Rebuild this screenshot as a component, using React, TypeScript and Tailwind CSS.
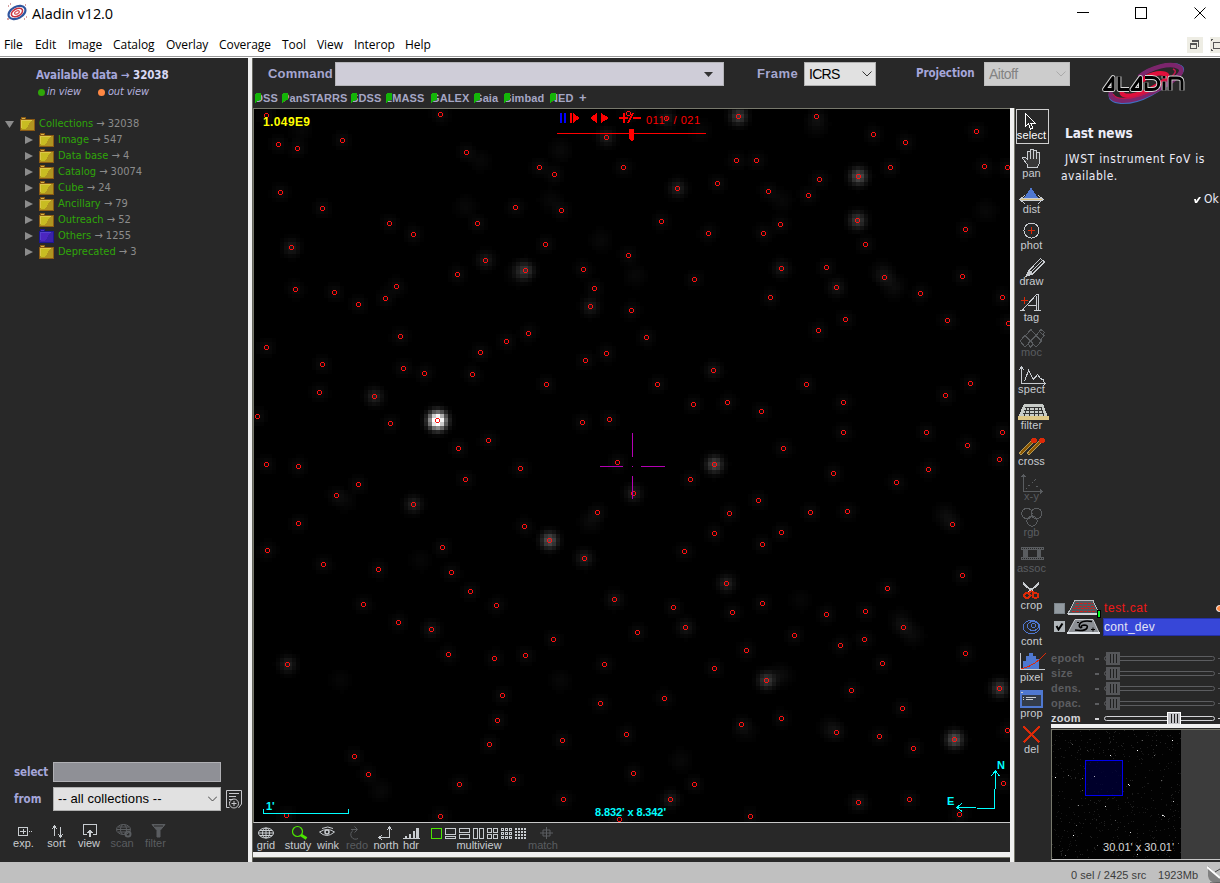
import type { ReactNode } from "react";

const tahoma = "font-['DejaVu_Sans_Condensed','DejaVu_Sans',sans-serif] [font-stretch:condensed]";
const arial = "font-['Liberation_Sans',sans-serif]";

/* ---------- Sky view data ---------- */

const SOURCES: [number, number][] = [
  [266, 115], [440, 114], [342, 140], [278, 144], [297, 148], [466, 152], [606, 137], [554, 174], [539, 167], [280, 192],
  [322, 208], [389, 223], [413, 234], [291, 247], [477, 223], [515, 207], [561, 210], [623, 167], [677, 188], [717, 183],
  [661, 221], [545, 244], [485, 260], [457, 274], [525, 270], [583, 269], [628, 255], [594, 288], [590, 306], [631, 310],
  [295, 289], [334, 292], [358, 304], [385, 298], [396, 286], [266, 347], [322, 364], [319, 392], [374, 396], [400, 336],
  [403, 368], [424, 373], [390, 423], [437, 420], [472, 374], [480, 352], [506, 341], [528, 333], [546, 384], [585, 360],
  [606, 353], [646, 337], [657, 384], [257, 416], [266, 464], [298, 466], [336, 495], [358, 484], [298, 523], [267, 550],
  [323, 564], [378, 569], [363, 604], [398, 622], [431, 629], [448, 654], [287, 664], [442, 547], [451, 572], [470, 591],
  [496, 605], [494, 658], [413, 504], [465, 479], [458, 448], [488, 440], [520, 468], [524, 526], [549, 540], [584, 558],
  [597, 512], [633, 493], [617, 462], [582, 422], [609, 419], [614, 599], [637, 632], [604, 664], [553, 639], [525, 655],
  [502, 695], [497, 720], [489, 744], [459, 784], [513, 779], [562, 740], [600, 703], [626, 734], [664, 698], [633, 773],
  [563, 799], [440, 816], [354, 756], [368, 774], [286, 815], [619, 819], [670, 799], [694, 784], [750, 816],
  [738, 116], [816, 116], [873, 134], [905, 142], [976, 131], [736, 160], [756, 160], [890, 167], [984, 166], [1007, 167],
  [768, 191], [819, 179], [808, 195], [858, 176], [708, 233], [763, 233], [780, 224], [857, 220], [865, 244], [965, 229],
  [694, 279], [781, 268], [826, 267], [836, 287], [770, 297], [884, 277], [962, 276], [920, 293], [1002, 297], [818, 330],
  [845, 319], [947, 320], [1008, 323], [713, 370], [727, 402], [693, 404], [761, 411], [806, 384], [843, 402], [843, 432],
  [945, 395], [970, 383], [926, 432], [967, 445], [999, 459], [1002, 432], [714, 464], [690, 479], [783, 448], [833, 473],
  [928, 469], [896, 482], [758, 500], [729, 513], [714, 533], [684, 551], [762, 544], [781, 532], [810, 512], [847, 511],
  [952, 524], [962, 575], [726, 583], [732, 612], [762, 603], [673, 607], [685, 627], [746, 650], [714, 668], [794, 635],
  [826, 614], [865, 611], [887, 588], [903, 627], [840, 645], [864, 639], [882, 663], [965, 653], [766, 680], [851, 690],
  [902, 708], [781, 718], [741, 724], [836, 732], [879, 736], [913, 748], [954, 739], [999, 688], [1007, 730], [858, 802],
  [909, 799], [959, 814], [1003, 783], [666, 118], [628, 113],
];

const GLOW: Record<string, number> = {
  "437,420": 340, "549,540": 84, "858,176": 82, "857,220": 60, "714,464": 72, "954,739": 82, "738,116": 60,
  "999,688": 56, "766,680": 58, "374,396": 36, "413,504": 34, "287,664": 32, "291,247": 26, "525,270": 44,
  "677,188": 32, "584,558": 30, "726,583": 34, "633,493": 30, "590,306": 28, "485,260": 26, "781,268": 24,
  "606,137": 28, "836,287": 22, "614,599": 20, "431,629": 20, "858,802": 22, "685,627": 22, "713,370": 20,
  "670,799": 26, "666,118": 24,
};

const FAINT: [number, number, number][] = [
  [590, 521, 10], [882, 272, 12], [893, 286, 12], [781, 200, 8], [420, 560, 6], [340, 680, 6], [900, 620, 10],
  [912, 634, 10], [519, 272, 18], [800, 600, 6], [465, 206, 8], [300, 130, 7], [700, 130, 7], [560, 150, 9],
  [480, 160, 7], [600, 240, 8], [745, 730, 8], [830, 728, 12], [985, 210, 8], [816, 125, 10], [380, 790, 8],
  [550, 200, 8], [680, 760, 8], [560, 680, 7], [945, 515, 12], [780, 675, 12], [345, 500, 7], [635, 275, 8],
];

type Cell = { x: number; y: number; v: number };

function buildGlow(): Cell[] {
  const sum = new Map<string, Cell>();
  const add = (cx: number, cy: number, amp: number, sigma: number) => {
    const x0 = Math.floor(cx / 4) * 4;
    const y0 = Math.floor((cy - 2) / 4) * 4 + 2;
    for (let i = -4; i <= 4; i++)
      for (let j = -4; j <= 4; j++) {
        const x = x0 + i * 4;
        const y = y0 + j * 4;
        const dx = x + 2 - cx - 0.5;
        const dy = y + 2 - cy - 0.5;
        const v = amp * Math.exp(-(dx * dx + dy * dy) / (2 * sigma * sigma));
        if (v < 1.5) continue;
        const key = `${x},${y}`;
        const cell = sum.get(key);
        if (cell) cell.v += v;
        else sum.set(key, { x, y, v });
      }
  };
  SOURCES.forEach(([x, y]) => add(x, y, GLOW[`${x},${y}`] ?? 11, 5.6));
  FAINT.forEach(([x, y, a]) => add(x, y, a, 7));
  return [...sum.values()];
}

const CELLS = buildGlow();

const ringPath = SOURCES.map(
  ([x, y]) => `M${x - 1} ${y - 2}h3v1h-3zM${x - 1} ${y + 2}h3v1h-3zM${x - 2} ${y - 1}h1v3h-1zM${x + 2} ${y - 1}h1v3h-1z`,
).join("");

function SkyView() {
  return (
    <svg className="block h-[713px] w-[756px] bg-black" viewBox="254 109 756 713" shapeRendering="crispEdges">
      {CELLS.map((c) => {
        const v = Math.min(255, Math.round(c.v));
        return <rect key={`${c.x},${c.y}`} x={c.x} y={c.y} width="4" height="4" fill={`rgb(${v},${v},${v})`} />;
      })}
      <path d={ringPath} fill="#ff1010" />
      <path d="M600 466.5h23M641 466.5h24M632.5 433v24M632.5 476v23M632 466.5h1" stroke="#b400b4" fill="none" />
      <path d="M560.5 113v10M564.5 113v10" stroke="#0000ff" strokeWidth="2" />
      <path d="M570 113h2v10h-2zM573 113l7 5l-7 5zM597 113v10l-7-5zM601 113l8 5l-8 5zM619 117h9v2h-9zM623 113h2v10h-2zM633 117h8v2h-8z" fill="#ff0000" />
      <path d="M628 123l5-10" stroke="#ff0000" strokeWidth="1.5" />
      <path d="M557 133.5h149" stroke="#ff0000" />
      <path d="M629 129h5v10l-2 2h-1l-2-2z" fill="#ff0000" />
      <g className="font-['Liberation_Sans',sans-serif]">
        <text x="646" y="124" fontSize="11" fill="#ff0000" textLength="54">011° / 021</text>
        <text x="263" y="126" fontSize="12" fontWeight="700" fill="#ffff00" textLength="47">1.049E9</text>
        <text x="266" y="810" fontSize="11" fontWeight="700" fill="#00ffff">1'</text>
        <text x="595" y="816" fontSize="11" fontWeight="700" fill="#00ffff" textLength="71">8.832' x 8.342'</text>
        <text x="997" y="769" fontSize="11" fontWeight="700" fill="#00ffff">N</text>
        <text x="947" y="805" fontSize="11" fontWeight="700" fill="#00ffff">E</text>
      </g>
      <path d="M263.5 809v5M263 813.5h86M348.5 809v5" stroke="#00ffff" fill="none" />
      <path d="M995.500 771.500L994.500 808.500L957.500 807.500M991 776l4.500-5l4 5M962 803l-5 4.500l5 4" stroke="#00ffff" fill="none" />
    </svg>
  );
}

/* ---------- Left panel ---------- */

function Folder({ blue }: { blue?: boolean }) {
  return (
    <svg className="h-[14px] w-[15px] shrink-0" viewBox="0 0 15 14" shapeRendering="crispEdges">
      <path d="M0 2h1V0h5v2h9v12H0z" fill={blue ? "#1d1791" : "#8a5a14"} />
      <path d="M2 1h3v1H2z" fill={blue ? "#4a35c0" : "#d8b24a"} />
      <path d="M1 3h13v10H1z" fill={blue ? "#3a22a8" : "#b09420"} />
      <path d="M1 3h11v1H2v7H1z" fill={blue ? "#5540cc" : "#dcc84a"} />
      <path d="M2 4h9l-5 8H2z" fill={blue ? "#4b26c0" : "#c8bc22"} />
    </svg>
  );
}

const TREE: [string, string, boolean?][] = [
  ["Image", "547"], ["Data base", "4"], ["Catalog", "30074"], ["Cube", "24"], ["Ancillary", "79"],
  ["Outreach", "52"], ["Others", "1255", true], ["Deprecated", "3"],
];

function TreeLabel({ name, count }: { name: string; count: string }) {
  return (
    <span className={`${tahoma} ml-1 text-[11px] leading-4 tracking-normal whitespace-nowrap text-[#2fa608]`}>
      {name} <span className="text-[#8c8c8c]">→ {count}</span>
    </span>
  );
}

function BottomTool({ label, w, off, children }: { label: string; w: string; off?: boolean; children: ReactNode }) {
  return (
    <div className={`flex shrink-0 flex-col items-center ${w} ${off ? "text-[#5a5d60]" : "text-[#c8ccd0]"}`}>
      {children}
      <span className={`${arial} text-[11px] leading-[10px] whitespace-nowrap`}>{label}</span>
    </div>
  );
}

const ic = "block h-[14px] w-5 fill-none stroke-current";

function LeftPanel() {
  return (
    <aside className="flex h-[804px] w-[248px] shrink-0 flex-col bg-[#282828]">
      <div className={`${tahoma} pt-[9px] pl-[36px] text-[11.500px] leading-4 font-bold tracking-[-0.120px] text-[#a5a6da]`}>
        Available data → <span className="text-[#d9d9f5]">32038</span>
      </div>
      <div className={`${tahoma} mt-px flex items-center pl-[38px] text-[11px] leading-4 tracking-[-0.150px] text-[#b3b0dc] italic`}>
        <span className="mr-[2px] size-[7px] rounded-full bg-[#2fa608]" />in view
        <span className="mr-[3px] ml-[17px] size-[7px] rounded-full bg-[#ff8844]" />out view
      </div>
      <div className="mt-[16px] flex h-4 items-center">
        <svg className="mr-[6px] ml-[5px] h-[14px] w-[9px]" viewBox="0 0 9 14"><path d="M0 4h9l-4.500 7z" fill="#8c8c8c" /></svg>
        <Folder />
        <TreeLabel name="Collections" count="32038" />
      </div>
      {TREE.map(([name, count, blue]) => (
        <div key={name} className="flex h-4 items-center">
          <svg className="mr-[6px] ml-[25px] h-[14px] w-2" viewBox="0 0 8 14"><path d="M0 3l8 4l-8 4z" fill="#8c8c8c" /></svg>
          <Folder blue={blue} />
          <TreeLabel name={name} count={count} />
        </div>
      ))}
      <div className="mt-auto flex h-5 items-center">
        <span className={`${tahoma} mt-[2px] ml-[14px] w-[39px] text-[11.500px] font-bold tracking-[-0.1px] text-[#a5a6da]`}>select</span>
        <div className="h-5 w-[168px] border border-[#b0b0b4] bg-[#8f9096]" />
      </div>
      <div className="mt-[5px] flex h-6 items-center">
        <span className={`${tahoma} mt-[2px] ml-[14px] w-[39px] text-[11.500px] font-bold tracking-normal text-[#a5a6da]`}>from</span>
        <div className={`${arial} flex h-6 w-[168px] items-center justify-between border border-[#b0b0b0] bg-[#e1e1e1] pr-[3px] pl-1 text-[13px] tracking-[0.080px] text-black`}>
          -- all collections --
          <svg className="h-[6px] w-[9px] fill-none stroke-[#444]" viewBox="0 0 9 6"><path d="M0 .5l4.500 4.500l4.500-4.500" /></svg>
        </div>
        <svg className="ml-[5px] h-[19px] w-4 fill-none stroke-[#c8c8cc]" viewBox="0 0 16 19">
          <path d="M15.500 14V.5H.5v17h3M15.500 14l-3 4M3 3.500h10M3 6.500h7M3 9.500h4M3 12.500h1" />
          <circle cx="8" cy="13.500" r="4.500" /><path d="M5.500 13.500h5M8 11v5" />
        </svg>
      </div>
      <div className="mt-[13px] mb-[13px] flex h-[25px] pl-[7px]">
        <BottomTool label="exp." w="w-[33px]">
          <svg className={ic} viewBox="0 0 20 14" shapeRendering="crispEdges"><path d="M4.500 3.500h9v8h-9zM6 7.500h6M9.500 5v5M15 7.500h1M17 7.500h1" /></svg>
        </BottomTool>
        <BottomTool label="sort" w="w-[33px]">
          <svg className={ic} viewBox="0 0 20 14" shapeRendering="crispEdges"><path d="M7.500 12V2M5 5l2.500-3l2.500 3M13.500 3v10M11 10l2.500 3l2.500-3" /></svg>
        </BottomTool>
        <BottomTool label="view" w="w-[32px]">
          <svg className={`${ic} relative left-px`} viewBox="0 0 20 14" shapeRendering="crispEdges"><path d="M7 10.500H3.500v-10h13v10H13" /><path d="M10 5l3 4h-2v4H9V9H7z" className="fill-current stroke-none" /></svg>
        </BottomTool>
        <BottomTool label="scan" w="w-[34px]" off>
          <svg className={`${ic} relative left-[2px]`} viewBox="0 0 20 14"><ellipse cx="9.500" cy="5.500" rx="7" ry="5" /><ellipse cx="9.500" cy="5.500" rx="3" ry="5" /><path d="M2.500 5.500h14M4 3h11M4 8h7" /><circle cx="14" cy="10" r="2.500" strokeWidth="2" /></svg>
        </BottomTool>
        <BottomTool label="filter" w="w-[33px]" off>
          <svg className={`${ic} relative left-[2px]`} viewBox="0 0 20 14"><path d="M4 .5h13l-5 6v6.500h-3v-6.500z" fill="currentColor" /><path d="M6 2h9" stroke="#282828" /></svg>
        </BottomTool>
      </div>
    </aside>
  );
}

/* ---------- Top toolbar ---------- */

const SURVEYS: [string, string][] = [
  ["DSS", "w-[27px]"], ["PanSTARRS", "w-[69px]"], ["SDSS", "w-[35px]"], ["2MASS", "w-[45px]"],
  ["GALEX", "w-[43px]"], ["Gaia", "w-[30px]"], ["Simbad", "w-[46px]"], ["NED", "w-[29px]"],
];

function AladinLogo() {
  return (
    <svg className="h-[44px] w-[86px]" viewBox="0 0 86 44">
      <g fill="none">
        <path d="M9 31C5 43 28 45 50 33S88 9 80 4S50 4 38 14" stroke="#3f6fc0" strokeWidth="2" />
        <path d="M10 30C7 41 28 42 50 31S86 10 78 5S50 5 38 15" stroke="#7c256c" strokeWidth="4.500" />
        <path d="M21 29c-2 8 16 5 29-2s20-13 14-15s-18 1-23 7" stroke="#e0103c" strokeWidth="4.500" />
        <path d="M12 32c3 7 20 5 33-1M62 21c12-8 15-12 10-14" stroke="#c0164c" strokeWidth="1.500" />
      </g>
      <g fill="none" strokeLinejoin="round">
        {[["#d8d8d8", 4.8], ["#000", 3]].map(([stroke, w]) => (
          <path
            key={stroke}
            stroke={stroke}
            strokeWidth={w}
            d="M3.500 27.500L12 15.500v12zM18 14.500v13H28M31 27.500L39.500 15.500v12zM44 15.500h7c9 0 9 12 0 12h-6v-7M63 19.500v9M63 14v2.500M69 28.500V16h7c5 0 5 2 5 4v8.500"
          />
        ))}
      </g>
    </svg>
  );
}

function TopBar() {
  return (
    <div className="flex h-[50px] w-full shrink-0 bg-[#282828]">
      <div className="w-[490px] shrink-0">
        <div className="flex h-[32px] items-center">
          <span className={`${arial} ml-[15px] w-[67px] text-[13px] font-bold tracking-[0.2px] text-[#a5a6cf]`}>Command</span>
          <div className="flex h-6 w-[389px] shrink-0 items-center justify-end border border-[#b4b4b8] bg-[#cfcdd8] pr-[10px]">
            <svg className="h-[5px] w-[9px]" viewBox="0 0 9 5"><path d="M0 0h9l-4.500 5z" fill="#333" /></svg>
          </div>
        </div>
        <div className={`${arial} flex h-4 items-center pl-[2px] text-[11px] font-bold tracking-[0.1px] text-[#a5a6c4]`}>
          {SURVEYS.map(([s, w]) => (
            <div key={s} className={`relative shrink-0 ${w}`}>
              {s}
              <svg className="absolute top-[3px] left-0 h-[11px] w-[7px]" viewBox="0 0 7 11" shapeRendering="crispEdges"><path d="M1 0h4l1 1v6l-4 1l-2 2V1z" fill="#14b408" /></svg>
            </div>
          ))}
          <span className="text-[13px]">+</span>
        </div>
      </div>
      <div className="flex h-[32px] items-center">
        <span className={`${arial} ml-[14px] w-[47px] text-[13px] font-bold tracking-[0.4px] text-[#a5a6cf]`}>Frame</span>
        <div className={`${arial} flex h-6 w-[72px] items-center justify-between border border-[#b0b0b0] bg-[#e1e1e1] pr-[3px] pl-[4px] text-[14px] tracking-[-0.7px] text-black`}>
          ICRS
          <svg className="h-[6px] w-[10px] fill-none stroke-[#333]" viewBox="0 0 10 6"><path d="M.5 .5l4.500 4.500l4.500-4.500" /></svg>
        </div>
        <span className={`${tahoma} ml-[40px] w-[68px] text-[11.500px] font-bold tracking-[-0.1px] text-[#a5a6da]`}>Projection</span>
        <div className={`${arial} flex h-6 w-[86px] items-center justify-between border border-[#bdbdbd] bg-[#cccccc] pr-[3px] pl-[4px] text-[14px] tracking-[-0.5px] text-[#838383]`}>
          Aitoff
          <svg className="h-[6px] w-[10px] fill-none stroke-[#aaa]" viewBox="0 0 10 6"><path d="M.5 .5l4.500 4.500l4.500-4.500" /></svg>
        </div>
      </div>
      <div className="pt-[4px] pl-[31px]"><AladinLogo /></div>
    </div>
  );
}

/* ---------- Bottom toolbar of the view ---------- */

function grid(x: number, cols: number, rows: number, cw: number, ch: number, sx: number, sy: number) {
  let d = "";
  for (let r = 0; r < rows; r++) for (let c = 0; c < cols; c++) d += `M${x + c * sx + 0.5} ${0.5 + r * sy}h${cw}v${ch}h${-cw}z`;
  return d;
}

function ViewToolbar() {
  return (
    <div className="flex h-[29px] bg-[#282828] pt-[3px]">
      <BottomTool label="grid" w="w-[24px]">
        <svg className={ic} viewBox="0 0 20 14"><ellipse cx="10" cy="7" rx="7.500" ry="5" /><ellipse cx="10" cy="7" rx="3.500" ry="5" /><path d="M10 2v10M2.500 7h15M4 4.500h12M4 9.500h12" /></svg>
      </BottomTool>
      <BottomTool label="study" w="w-[40px]">
        <svg className={`${ic} overflow-visible`} viewBox="0 0 20 14"><circle cx="9.500" cy="5.500" r="5" stroke="#4ce600" strokeWidth="1.200" /><path d="M13 9l5.500 3.500" stroke="#4ce600" strokeWidth="2.800" /></svg>
      </BottomTool>
      <BottomTool label="wink" w="w-[20px]">
        <svg className={ic} viewBox="0 0 20 14"><path d="M4 2.500q6-3 11 0M1.500 6q8-5 15 0q-8 7-15 0z" /><circle cx="9" cy="6" r="2" strokeWidth="1.500" /></svg>
      </BottomTool>
      <BottomTool label="redo" w="w-[38px]" off>
        <svg className={ic} viewBox="0 0 20 14"><path d="M6 4.500a4.500 4.500 0 1 0 5 8M4 3.500h6M7.500 .5l3 3l-3 3" /></svg>
      </BottomTool>
      <BottomTool label="north" w="w-[20px]">
        <svg className={ic} viewBox="0 0 20 14" shapeRendering="crispEdges"><path d="M13.500 1v10.500H3M11 4l2.500-3l2.500 3M6 9l-3 2.500l3 2.500" /></svg>
      </BottomTool>
      <BottomTool label="hdr" w="w-[30px]">
        <svg className={ic} viewBox="0 0 20 14" shapeRendering="crispEdges"><path d="M2 12h17v1H2zM4 10h2v2H4zM8 8h2v4H8zM12 5h2v7h-2zM15 2h3v10h-3z" className="fill-current stroke-none" /></svg>
      </BottomTool>
      <BottomTool label="multiview" w="w-[106px]">
        <svg className="mt-[2px] block h-[12px] w-[97px] fill-none stroke-current" viewBox="0 0 97 12" shapeRendering="crispEdges">
          <path d="M.5 .5h10v10H.5z" stroke="#4ce600" />
          <path d={`M14.500 .5h10v6h-10zM14.500 8.500h10v2h-10z${grid(28, 1, 2, 10, 4, 0, 6)}${grid(42, 2, 1, 4, 10, 6, 0)}${grid(56, 2, 2, 4, 4, 6, 6)}${grid(70, 3, 3, 2, 2, 4, 4)}`} />
          <path d="M84 1h11M84 4h11M84 7h11M84 10h11" strokeWidth="2" strokeDasharray="2 1" />
        </svg>
      </BottomTool>
      <BottomTool label="match" w="w-[22px]" off>
        <svg className={`${ic} relative left-[3px]`} viewBox="0 0 20 14"><path d="M10.500 1v12M4 7h13M7 4h7v6H7z" /></svg>
      </BottomTool>
    </div>
  );
}

/* ---------- Tool column ---------- */

const R = "#dd2a08";
const B = "#4f78d0";

const TOOLS: { label: string; off?: boolean; art: ReactNode }[] = [
  { label: "select", art: <path d="M10.500 5.500v13l3-3l2 5.500l2.500-1l-2.500-5h4.500z" stroke="#fff" /> },
  { label: "pan", art: <path d="M12.500 23.500v-3l-5-6c0-2 2.500-1.500 5 1V8q1.500-2 3 0V6q1.500-1.500 3 0v1q1.500-1.500 3 0v2q2-1.500 3 0v10l-2 4.500zM15.500 8v7M18.500 7v8M21.500 9v6" fill="#383838" /> },
  { label: "dist", art: <><path d="M16 7.500l7 10.500H9z" fill={B} stroke="none" /><path d="M5 18.500h23M5 20.500h23M10 15l-5 4.500l5 4.500M23 15l5 4.500l-5 4.500" /><path d="M6 19.500h21" stroke="#d8c080" /></> },
  { label: "phot", art: <><circle cx="16.500" cy="14.500" r="7.500" /><path d="M13 14.500h7M16.500 11v7" stroke={R} /></> },
  { label: "draw", art: <><path d="M14 18.500L25.500 6.500l4 3.500l-12 12zM16 20L27.500 8.500" /><path d="M11 24.500l2.500-6l4 3.500z" fill="currentColor" /></> },
  { label: "tag", art: <><path d="M6 12.500h7M9.500 9v7" stroke={R} /><path d="M5 22.500h5M7 22.500L21.500 6.500h2v16M21.500 8v14M19 22.500h7M13 17.500h8" /></> },
  { label: "moc", off: true, art: <path d="M5 15.500l5-5.500l5.500 5.500l-5.500 6zM10.500 10l5.500-6l5 6l-5.500 5.500M15.500 15.500l5.500-5.500l5.500 5.500l-5.500 6zM21 10l3.500-4l4.500 4l-3 4M24 6l2-2l3.500 3l-2 2.500M13 18.500l2.500 3l3-3" transform="translate(0 1.500)" /> },
  { label: "spect", art: <path d="M6.500 7v16.500H30M4 10l2.500-3L9 10M28 21l2.500 2.500L28 26M9.500 21.500l4-11l5 9l4-5l3 4l4 2" /> },
  { label: "filter", art: <><path d="M9 8h19l5 13H3z" fill="#c8ccc8" stroke="none" /><path d="M10 11.500h17M9 14.500h19M8 17.500h21M12 11l-3 9M15 11l-1 9M19 11v9M23 11l1 9M26 11l3 9" stroke="#333" /><path d="M3 20h31v4H3z" fill="#dfc888" stroke="none" /></> },
  { label: "cross", art: <><path d="M5 22.500L18 9M13 22.500L26 9" stroke="#b49a58" strokeWidth="3.500" /><path d="M5.500 22L18 9M13.500 22L26 9" stroke="#8a5600" strokeWidth="2" /><circle cx="19" cy="8.500" r="3" fill={R} stroke="none" /><circle cx="27" cy="8.500" r="3" fill={R} stroke="none" /></> },
  { label: "x-y", off: true, art: <><path d="M8.500 7v16.500H27M6.500 9l2-2l2 2M25 21.500l2 2l-2 2" /><path d="M11 21L22 10M13 17h3M21 18h2" strokeDasharray="2 2" /></> },
  { label: "rgb", off: true, art: <><circle cx="12" cy="9.500" r="5.200" /><circle cx="21.500" cy="9.500" r="5.200" /><circle cx="17" cy="17" r="5.200" /></> },
  { label: "assoc", off: true, art: <><path d="M6 7h23v13H6z" fill="currentColor" stroke="none" /><path d="M7 8.500h21M7 18.500h21" stroke="#282828" strokeDasharray="1 1" /><path d="M13 10h9v7h-9zM6 10h2v7H6zM26 10h3v7h-3z" fill="#282828" stroke="none" /></> },
  { label: "crop", art: <><path d="M8 7l11 10M24 7L13 17" strokeWidth="2" /><ellipse cx="12" cy="19.500" rx="3" ry="2.300" stroke={R} strokeWidth="2" /><ellipse cx="20.500" cy="19.500" rx="3" ry="2.300" stroke={R} strokeWidth="2" /><path d="M14 17l2.500-2l2.500 2" stroke={R} strokeWidth="2" /></> },
  { label: "cont", art: <g stroke={B}><ellipse cx="16.500" cy="15" rx="8.500" ry="6.500" /><ellipse cx="18" cy="14" rx="5.500" ry="4.500" /><circle cx="18.500" cy="13.500" r="2" /></g> },
  { label: "pixel", art: <><path d="M8 21v-8h3v-5h3v-3h4v3h3v3h3v10z" fill={B} stroke="none" /><path d="M5.500 5v16.500H30" /><path d="M6 21Q20 18 31 5" stroke={R} /></> },
  { label: "prop", art: <><path d="M5 6h23v18H5z" fill={B} stroke="none" /><path d="M7 11h19v11H7z" fill="#333c4a" stroke="none" /><path d="M6 8h2M8 13.500h1M11 13.500h10M8 15.500h1M11 15.500h7" /></> },
  { label: "del", art: <path d="M8.500 6.500l16 16M24.500 6.500l-16 16" stroke={R} strokeWidth="2" /> },
];

function ToolColumn() {
  return (
    <div className="flex w-9 shrink-0 flex-col">
      {TOOLS.map((t, i) => (
        <div key={t.label} className={`relative flex h-9 w-[33px] flex-col items-center ${t.off ? "text-[#5a5d60]" : "text-[#c8ccd0]"}`}>
          {i === 0 && <span className="absolute top-px left-px h-[35px] w-[33px] border border-[#d0d0d0]" />}
          <svg className="block h-[21px] w-9 shrink-0 self-start overflow-visible fill-none stroke-current" viewBox="0 0 36 21" shapeRendering="crispEdges">{t.art}</svg>
          <span className={`${arial} relative text-[11px] leading-3 tracking-[0.1px] ${i === 0 ? "text-white" : t.off ? "top-px" : "top-[2px]"}`}>{t.label}</span>
        </div>
      ))}
    </div>
  );
}

/* ---------- Right panel ---------- */

function Slider({ label, on }: { label: string; on?: boolean }) {
  return (
    <div className={`flex h-[15px] items-center ${on ? "text-[#d4d4d8]" : "text-[#5c5d60]"}`}>
      <span className={`${arial} w-[44px] shrink-0 text-[11px] font-bold tracking-[0.3px]`}>{label}</span>
      <span className="mr-[5px] h-[2px] w-1 shrink-0 bg-current" />
      <div className={`flex h-[5px] w-[111px] shrink-0 items-center rounded-sm border border-current ${on ? "pl-[62px]" : "pl-px"}`}>
        <span className={`flex h-[13px] w-[14px] shrink-0 items-center justify-center gap-[2px] ${on ? "border border-white bg-[#c4c4c8]" : "bg-[#555659]"}`}>
          <i className="h-[9px] w-px bg-[#202020]" /><i className="h-[9px] w-px bg-[#202020]" /><i className="h-[9px] w-px bg-[#202020]" />
        </span>
      </div>
      <span className="ml-[3px] h-px w-1 shrink-0 bg-current" />
    </div>
  );
}

const THUMB: [number, number, number][] = [
  [120, 10, 255], [85, 20, 255], [58, 25, 240], [102, 25, 110], [3, 47, 255], [42, 46, 160], [30, 48, 120], [76, 54, 255],
  [77, 55, 200], [121, 71, 190], [53, 76, 220], [26, 75, 150], [110, 85, 255], [111, 85, 200], [112, 86, 180], [21, 105, 255],
  [78, 102, 210], [85, 124, 220], [70, 33, 120], [16, 45, 130], [45, 115, 110], [96, 118, 100], [13, 125, 120], [126, 113, 110],
  [90, 10, 90], [30, 60, 80], [109, 50, 100], [24, 95, 110], [35, 20, 70], [63, 90, 90], [20, 14, 90], [104, 15, 70],
];

const NOISE = Array.from({ length: 520 }, (_, i) => {
  const a = (i * 7919 + ((i * i) % 101) * 31) % 129;
  const b = (i * 104729 + ((i * i * 3) % 97) * 17) % 128;
  return { x: a, y: b, v: 18 + ((i * 37) % 22) };
});

function Thumbnail() {
  return (
    <div className="flex h-[131px] border-t border-b border-l border-[#77786c] border-b-[#c8c8c8] bg-[#3c3c3c]">
      <svg className="block h-[129px] w-[129px] shrink-0 overflow-visible bg-[#020202]" viewBox="0 0 129 129" shapeRendering="crispEdges">
        {NOISE.map((n, i) => <rect key={i} x={n.x} y={n.y} width="1" height="1" fill={`rgb(${n.v},${n.v},${n.v})`} />)}
        {THUMB.map(([x, y, v]) => <rect key={`${x}-${y}`} x={x} y={y} width="1" height="1" fill={`rgb(${v},${v},${v})`} />)}
        <rect x="33.500" y="30.500" width="37" height="35" fill="#00003a" fillOpacity=".75" stroke="#0000f0" />
        <path d="M42 46h1v1h-1z" fill="#aab" />
        <text x="51" y="121" fontSize="11" fill="#d8d8d8" textLength="71" className="font-['Liberation_Sans',sans-serif]">30.01' x 30.01'</text>
      </svg>
    </div>
  );
}

function RightPanel() {
  return (
    <div className="flex w-[169px] shrink-0 flex-col overflow-hidden">
      <div className={`${tahoma} h-[491px] shrink-0 pt-[16px] whitespace-nowrap text-[#ececf8]`}>
        <div className="pl-[14px] text-[13.500px] leading-[18px] font-bold tracking-[-0.1px]">Last news</div>
        <div className="mt-[9px] pl-[14px] text-[12px] leading-[17px] tracking-[0.680px]">JWST instrument FoV is</div>
        <div className="pl-[10px] text-[12px] leading-[17px] tracking-[0.450px]">available.</div>
        <div className="mt-[6px] flex items-center pl-[143px] text-[12px] leading-[17px]">
          <svg className="mr-[3px] h-[8px] w-[7px]" viewBox="0 0 7 8"><path d="M0 3h2v2l3-4h2l-4 6H1z" fill="#fff" /></svg>Ok
        </div>
      </div>
      <div className="flex h-[18px] shrink-0 items-center">
        <span className="ml-[3px] size-[11px] shrink-0 border border-[#7c858c] bg-[#929aa0]" />
        <svg className="ml-px h-[18px] w-[35px] shrink-0 overflow-visible" viewBox="0 0 35 18" shapeRendering="crispEdges">
          <path d="M9 1.500h18l6 13H2z" fill="#53585c" stroke="#b8bcc0" /><path d="M2 14h31v2H2z" fill="#d0d4d8" />
          <path d="M10 4.500h17M9 7.500h19M7 9.500h22M6 12.500h24" stroke="#cc2020" strokeDasharray="3 1" />
          <path d="M31 11h4v8h-4z" fill="#000" /><path d="M32 12h2v6h-2z" fill="#00ff20" />
        </svg>
        <span className={`${arial} ml-[3px] w-[112px] shrink-0 text-[12px] tracking-[0.6px] text-[#f01818]`}>test.cat</span>
        <span className="size-[7px] shrink-0 rounded-full border border-white bg-[#ff8844]" />
      </div>
      <div className="flex h-[19px] shrink-0 items-center">
        <span className="ml-[3px] flex size-[11px] shrink-0 items-center justify-center bg-[#b0b6ba]">
          <svg className="h-[9px] w-[9px] fill-none" viewBox="0 0 9 9"><path d="M1.500 4l2 3.500l4-6" stroke="#000" strokeWidth="2" /></svg>
        </span>
        <svg className="ml-px h-[18px] w-[35px] shrink-0" viewBox="0 0 35 18">
          <path d="M9 1.500h18l6 13H2z" fill="#8b8f94" stroke="#c8ccd0" /><path d="M1 14h33v2H1z" fill="#e0e4e8" />
          <path d="M9 12q10 1.500 12-2q1.500-3-3-3q-4 .5-2 3M26 3.500q-9-1.500-12 2q-2 3 1 4.500" fill="none" stroke="#000" strokeWidth="1.600" />
          <path d="M25 11.500h4M27 9.500v4M11 4.500h2" stroke="#000" />
        </svg>
        <span className={`${arial} ml-[2px] flex h-[18px] w-[118px] shrink-0 items-center border border-[#2430a8] bg-[#3747d8] text-[12px] tracking-[0.3px] text-[#e4e4f4]`}>cont_dev</span>
      </div>
      <div className="mt-[15px] h-[73px] shrink-0">
        <Slider label="epoch" />
        <Slider label="size" />
        <Slider label="dens." />
        <Slider label="opac." />
        <Slider label="zoom" on />
      </div>
      <div className="relative mb-px h-1 shrink-0 bg-[#f0f0f0]" />
      <Thumbnail />
    </div>
  );
}

/* ---------- Window ---------- */

export default function App() {
  return (
    <div className="flex h-[883px] w-[1220px] flex-col overflow-hidden bg-white">
      <header className="flex h-[30px] items-center">
        <svg className="mb-[5px] ml-[7px] h-[19px] w-[20px] fill-none" viewBox="0 0 20 19">
          <g transform="rotate(-28 10 9.500)">
            <ellipse cx="10" cy="9.500" rx="9" ry="5.800" stroke="#2f559e" strokeWidth="2.200" />
            <ellipse cx="10" cy="9.500" rx="6" ry="3.700" stroke="#c73340" strokeWidth="1.500" />
            <ellipse cx="10" cy="9.500" rx="2.500" ry="1.500" stroke="#d84850" strokeWidth="1.200" />
          </g>
          <path d="M1 3h1M3 1h1M17 16h1M19 14h1M0 16h2M18 2h1" stroke="#b04040" />
        </svg>
        <h1 className="mb-[3px] ml-[5px] font-['Open_Sans',sans-serif] text-[14.500px] leading-5 tracking-[-0.080px] text-black">Aladin v12.0</h1>
        <svg className="mr-[6px] mb-[4px] ml-auto h-[14px] w-[144px] fill-none stroke-black" viewBox="-14 0 144 14" shapeRendering="crispEdges">
          <path d="M-7 6.500h12" />
          <rect x="51.500" y="1.500" width="11" height="11" />
          <path d="M110.500 1.500l11 11M121.500 1.500l-11 11" shapeRendering="auto" />
        </svg>
      </header>
      <nav className="flex h-[26px] items-center font-['Open_Sans',sans-serif] text-[12px] tracking-[-0.050px] text-black">
        {[
          ["File", "w-[31px]"], ["Edit", "w-[33px]"], ["Image", "w-[45px]"], ["Catalog", "w-[53px]"], ["Overlay", "w-[53px]"],
          ["Coverage", "w-[63px]"], ["Tool", "w-[35px]"], ["View", "w-[37px]"], ["Interop", "w-[51px]"], ["Help", "w-[40px]"],
        ].map(([m, w]) => <span key={m} className={`shrink-0 pt-[4px] first:ml-1 ${w}`}>{m}</span>)}
        <svg className="mt-[3px] ml-auto h-4 w-[33px] fill-none stroke-[#555]" viewBox="0 0 33 16" shapeRendering="crispEdges">
          <path d="M0 0h16v16H0zM23 0h16v16H23z" fill="#eeede4" stroke="none" />
          <path d="M3.500 7.500h6v4h-6zM3 6.500h7M5 4.500h6.500v5M5 3.500h7M26.500 5.500h9v6h-9zM24.500 4V2.500H26M24.500 12v1.500H26" />
        </svg>
      </nav>
      <div className="h-[2px] border-t border-[#9a9a9a] bg-white" />
      <div className="flex h-[804px]">
        <LeftPanel />
        <div className="w-[4px] shrink-0 bg-[#f0f0f0]" />
        <div className="flex w-[968px] shrink-0 flex-col border-l border-[#66675f] bg-[#282828]">
          <TopBar />
          <div className="flex h-[754px]">
            <main className="w-[757px] shrink-0">
              <div className="border-t border-b border-l border-[#77786c] border-b-[#c8c8c8]"><SkyView /></div>
              <div className="pl-px"><ViewToolbar /></div>
              <div className="h-[6px] border-b border-[#77786c] bg-[#f0f0f0]" />
            </main>
            <div className="w-[5px] shrink-0 border-r border-[#77786c] bg-[#f0f0f0]" />
            <ToolColumn />
            <RightPanel />
          </div>
        </div>
      </div>
      <footer className={`${arial} flex h-[21px] items-center bg-[#c0c0c0] pt-[5px] pl-[1071px] text-[11px] tracking-[0.050px] whitespace-nowrap text-[#3c3c3c]`}>
        <span className="w-[87px] shrink-0">0 sel / 2425 src</span>
        <span className="w-[49px] shrink-0">1923Mb</span>
        <svg className="h-[19px] w-[13px] shrink-0" viewBox="0 0 13 19"><path d="M1 0v10q1 7 9 7h3v-5z" fill="#808080" /><path d="M0 1l13 11" stroke="#fff" strokeWidth="2" /><path d="M8 6l5-3M3 17h10v2H1z" stroke="#444" fill="#777" /></svg>
      </footer>
    </div>
  );
}
